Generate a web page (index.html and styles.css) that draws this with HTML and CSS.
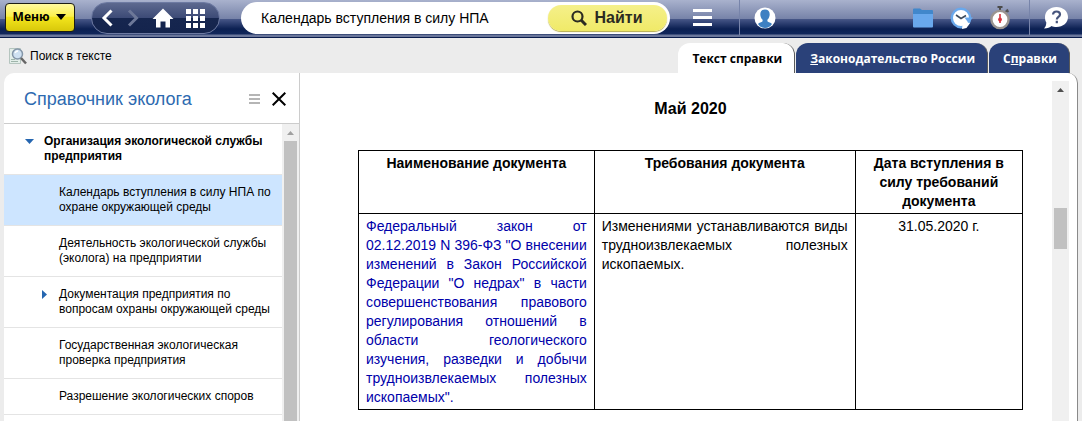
FILE: index.html
```html
<!DOCTYPE html>
<html lang="ru">
<head>
<meta charset="utf-8">
<meta name="viewport" content="width=device-width, initial-scale=1">
<title>Справочник эколога</title>
<link rel="stylesheet" href="styles.css">
</head>
<body>
<header class="topbar">
  <button class="menu-btn" type="button">Меню
    <svg width="12" height="6" viewBox="0 0 12 6" aria-hidden="true"><path d="M1 0h10L6 6z" fill="#000"/></svg>
  </button>
  <nav class="nav-pill" aria-label="Навигация">
    <button class="icon-btn" type="button" aria-label="Назад"><svg width="14" height="18" viewBox="0 0 14 18"><path d="M11.500 1.500 4 9l7.500 7.500" fill="none" stroke="#fff" stroke-width="3"/></svg></button>
    <button class="icon-btn" type="button" aria-label="Вперёд"><svg width="14" height="18" viewBox="0 0 14 18"><path d="M3 1.500 10.500 9 3 16.500" fill="none" stroke="#6d7898" stroke-width="3"/></svg></button>
    <button class="icon-btn" type="button" aria-label="Домой"><svg width="22" height="20" viewBox="0 0 22 20"><path d="M11 0.500 21.500 11H18v8.500h-4.500v-6h-5v6H4V11H0.500z" fill="#fff"/></svg></button>
    <button class="icon-btn grid-btn" type="button" aria-label="Разделы"><svg width="20" height="20" viewBox="0 0 20 20" fill="#fff"><path d="M0 1h5v5H0zM7 1h5v5H7zM14 1h5v5h-5zM0 8h5v5H0zM7 8h5v5H7zM14 8h5v5h-5zM0 15h5v5H0zM7 15h5v5H7zM14 15h5v5h-5z"/></svg></button>
  </nav>
  <form class="search">
    <input class="search-input" type="text" aria-label="Поиск" value="Календарь вступления в силу НПА">
    <button class="find-btn" type="button">
      <svg width="16" height="16" viewBox="0 0 16 16" aria-hidden="true"><circle cx="6.500" cy="6.500" r="5" fill="none" stroke="#2b2b22" stroke-width="2.200"/><path d="m10 10 5 5" stroke="#2b2b22" stroke-width="3"/></svg>
      Найти
    </button>
  </form>
  <button class="icon-btn burger" type="button" aria-label="Список"><svg width="20" height="18" viewBox="0 0 20 18"><path d="M1 0h19v3H1zM1 7h19v3H1zM1 14h19v3H1z" fill="#fff"/></svg></button>
  <span class="divider"></span>
  <button class="icon-btn user" type="button" aria-label="Профиль"><svg width="22" height="22" viewBox="0 0 22 22"><circle cx="11" cy="11" r="10.500" fill="#fff"/><path d="M11 2.500c3 0 4.700 2 4.700 4.700 0 2-.8 4.300-2.300 5.500v1.500c1 1 3.500 1.200 4.600 2.700-1.500 2.400-4.200 4-7 4s-5.500-1.600-7-4c1.100-1.500 3.600-1.700 4.600-2.700v-1.500c-1.500-1.200-2.300-3.500-2.300-5.500C6.300 4.500 8 2.500 11 2.500z" fill="#3e80c2"/></svg></button>
  <div class="tools">
    <button class="icon-btn" type="button" aria-label="Папки"><svg width="20" height="20" viewBox="0 0 20 20"><path d="M0 1.500Q0 .5 1 .5h6l2 1.500h10q1 0 1 1V7H0z" fill="#4187cb"/><path d="M0 6h20v12.500q0 1-1 1H1q-1 0-1-1z" fill="#69a8ec"/></svg></button>
    <button class="icon-btn" type="button" aria-label="История"><svg width="23" height="22" viewBox="0 0 23 22"><circle cx="11" cy="11" r="9.200" fill="#fff" stroke="#69a8ec" stroke-width="2.400"/><path d="m12 22 .5-4 4.500-3 3 1-3.500 5z" fill="#fff"/><path d="M14.500 10.500H23L18.500 16z" fill="#69a8ec"/><path d="m6 8 5 3.500L16 8.500" fill="none" stroke="#3d4a5c" stroke-width="1.600"/></svg></button>
    <button class="icon-btn" type="button" aria-label="Таймер"><svg width="20" height="24" viewBox="0 0 20 24"><path d="M7.500 0h5v2h-1.500v2H9V2H7.500z" fill="#4b4b4b"/><path d="m15.500 6 2.500-2.500M16.500 4l2 2" stroke="#555" stroke-width="1.800"/><circle cx="10" cy="13.500" r="8.600" fill="#fff" stroke="#9a9490" stroke-width="2.400"/><path d="M10 8v9" stroke="#d8323c" stroke-width="1.600"/><circle cx="10" cy="13.500" r="1.900" fill="#d8323c"/></svg></button>
  </div>
  <span class="divider"></span>
  <button class="icon-btn help" type="button" aria-label="Справка"><svg width="26" height="22" viewBox="0 0 26 22"><path d="M13.500 0C20 0 25 4.300 25 10s-5 10-11.500 10c-2 0-3.500-.3-5-1-1.500 1.500-4 2.500-7.500 2.500C2.500 20 3.300 18 3.300 15.500 2.300 14 2 12 2 10 2 4.300 7 0 13.500 0z" fill="#fff"/><path d="M10 7.500c.2-2 1.500-3 3.500-3 2.200 0 3.500 1.100 3.500 2.900 0 2.500-3.200 2.400-3.200 5M13.800 13.800v2.400" fill="none" stroke="#46547c" stroke-width="2.200"/></svg></button>
</header>

<div class="subbar">
  <a class="text-search" href="#">
    <svg width="18" height="18" viewBox="0 0 18 18" aria-hidden="true"><path d="M.5 1.500h11v15H.5z" fill="#e3eee9" stroke="#b5c5bf"/><path d="M2 14.500h7M2 12.500h4" stroke="#9fb5ab"/><circle cx="8.500" cy="7" r="5" fill="#cfe1f2" stroke="#8496a8" stroke-width="1.500"/><path d="M6 6q1-2 3-2" fill="none" stroke="#fff" stroke-width="1.300"/><path d="m12 11 5 5.500" stroke="#666" stroke-width="2.500"/></svg>
    Поиск в тексте
  </a>
  <nav class="tabs">
    <a class="tab tab-active" href="#">Текст справки</a>
    <a class="tab" href="#"><u>З</u>аконодательство России</a>
    <a class="tab" href="#">С<u>п</u>равки</a>
  </nav>
</div>

<div class="panel">
  <aside class="sidebar">
    <div class="side-head">
      <h1 class="side-title">Справочник эколога</h1>
      <button class="icon-btn" type="button" aria-label="Меню справочника"><svg width="11" height="10" viewBox="0 0 11 10"><path d="M0 0h11v2H0zM0 4h11v2H0zM0 8h11v2H0z" fill="#b5b5b5"/></svg></button>
      <button class="icon-btn" type="button" aria-label="Закрыть"><svg width="14" height="14" viewBox="0 0 14 14"><path d="m.7.7 12.600 12.600M13.300.7.7 13.300" stroke="#000" stroke-width="2"/></svg></button>
    </div>
    <div class="side-body">
      <ul class="tree">
        <li class="node node-root"><svg class="arrow" width="9" height="5" viewBox="0 0 9 5"><path d="M0 0h9L4.500 5z" fill="#2566b0"/></svg><a href="#">Организация экологической службы предприятия</a></li>
        <li class="node node-active"><a href="#">Календарь вступления в силу НПА по охране окружающей среды</a></li>
        <li class="node"><a href="#">Деятельность экологической службы (эколога) на предприятии</a></li>
        <li class="node node-parent"><svg class="arrow" width="5" height="9" viewBox="0 0 5 9"><path d="M0 0v9l5-4.500z" fill="#2566b0"/></svg><a href="#">Документация предприятия по вопросам охраны окружающей среды</a></li>
        <li class="node"><a href="#">Государственная экологическая проверка предприятия</a></li>
        <li class="node"><a href="#">Разрешение экологических споров</a></li>
      </ul>
      <div class="side-scroll"><svg class="scroll-arrow" width="7" height="4" viewBox="0 0 7 4"><path d="M0 4h7L3.500 0z" fill="#a0a0a0"/></svg><div class="side-thumb"></div></div>
    </div>
  </aside>
  <main class="content">
    <article class="doc">
      <h2 class="doc-title">Май 2020</h2>
      <table class="doc-table">
        <colgroup><col class="col-name"><col class="col-req"><col class="col-date"></colgroup>
        <thead><tr><th>Наименование документа</th><th>Требования документа</th><th>Дата вступления в силу требований документа</th></tr></thead>
        <tbody><tr>
          <td><a class="doc-link" href="#">Федеральный закон от 02.12.2019 N 396-ФЗ "О внесении изменений в Закон Российской Федерации "О недрах" в части совершенствования правового регулирования отношений в области геологического изучения, разведки и добычи трудноизвлекаемых полезных ископаемых".</a></td>
          <td>Изменениями устанавливаются виды трудноизвлекаемых полезных ископаемых.</td>
          <td class="cell-date">31.05.2020 г.</td>
        </tr></tbody>
      </table>
    </article>
    <div class="doc-scroll"><svg class="scroll-arrow" width="7" height="4" viewBox="0 0 7 4"><path d="M0 4h7L3.500 0z" fill="#505050"/></svg><div class="doc-thumb"></div></div>
  </main>
</div>
</body>
</html>
```

FILE: styles.css
```css
* { box-sizing: border-box; }

body {
  margin: 0;
  min-height: 100vh;
  display: flex;
  flex-direction: column;
  background: #ececec;
  color: #000;
  font-family: "Liberation Sans", Arial, sans-serif;
  font-size: 12px;
}

a { color: inherit; text-decoration: none; }
svg { display: block; flex: none; }
button { font-family: inherit; cursor: pointer; }

.icon-btn {
  display: flex;
  padding: 0;
  border: 0;
  background: none;
}

/* Top bar */
.topbar {
  display: flex;
  align-items: center;
  height: 38px;
  padding: 0 13px 3px 5px;
  background: linear-gradient(#a9b2cd 0, #7682a8 19px, #475788 19px, #0b2052 29px, #10265b 34px, #6b779b 35px, #6b779b 37px, #0a1c4c 37px);
}

.menu-btn {
  display: flex;
  align-items: center;
  justify-content: center;
  gap: 6px;
  width: 70px;
  height: 29px;
  padding: 0 0 2px;
  border: 1px solid #1c1c14;
  border-radius: 4px;
  background: linear-gradient(#fff9a0, #fbf04c 45%, #f3e51c 50%, #d8c80a);
  font-family: "Open Sans", sans-serif;
  font-size: 12px;
  font-weight: 700;
}

.nav-pill {
  display: flex;
  align-items: center;
  gap: 12px;
  width: 129px;
  height: 32px;
  margin-left: 16px;
  padding: 0 13px 0 8px;
  border: 1px solid #6d7aa2;
  border-radius: 16px;
  background: linear-gradient(#5d698f, #3c4a76 50%, #16264f 50%, #14244d);
}

.search {
  display: flex;
  align-items: center;
  width: 429px;
  height: 32px;
  margin-left: 21px;
  padding: 0 3px 0 20px;
  border-radius: 16px;
  background: #fff;
}

.search-input {
  flex: 1;
  min-width: 0;
  padding: 0;
  border: 0;
  outline: 0;
  background: none;
  font-family: inherit;
  font-size: 14px;
}

.find-btn {
  display: flex;
  align-items: center;
  justify-content: center;
  gap: 8px;
  width: 119px;
  height: 26px;
  padding: 0 2px 0 0;
  border: 0;
  border-radius: 13px;
  background: linear-gradient(#f5f08a, #f0ea68);
  box-shadow: 0 1px 1px #b5ad4a;
  color: #2b2b22;
  font-size: 16px;
  font-weight: 700;
}

.burger { margin-left: 22px; }

.divider {
  width: 1px;
  height: 35px;
  margin: 0 14px 0 27px;
  background: #7784aa;
}

.tools {
  display: flex;
  align-items: center;
  gap: 17px;
  margin-left: auto;
}

.tools + .divider { margin: 0 13px 0 19px; }

/* Secondary bar */
.subbar {
  display: flex;
  align-items: flex-end;
  justify-content: space-between;
  height: 35px;
  padding: 0 12px 0 9px;
}

.text-search {
  display: flex;
  align-items: center;
  align-self: center;
  gap: 3px;
}

.tabs { display: flex; gap: 1px; }

.tab {
  height: 30px;
  padding: 0 12px 0 14px;
  border-right: 1px solid #5a5a5a;
  border-radius: 12px 12px 0 0;
  background: #2a4179;
  color: #fff;
  font-family: "Open Sans", sans-serif;
  font-size: 12px;
  font-weight: 700;
  line-height: 32px;
}

.tab-active { background: #fff; color: #000; }

/* Main panel */
.panel {
  flex: 1;
  display: flex;
  margin: 0 4px;
  border-right: 1px solid #8a8a8a;
  border-radius: 10px 10px 0 0;
  background: #fff;
  overflow: hidden;
}

.sidebar {
  flex: none;
  display: flex;
  flex-direction: column;
  width: 296px;
  border-right: 1px solid #ccc;
}

.side-head {
  display: flex;
  align-items: center;
  gap: 12px;
  height: 51px;
  padding: 2px 13px 0 20px;
  border-bottom: 1px solid #ccc;
}

.side-title {
  flex: 1;
  margin: 0;
  color: #2d6ab0;
  font-size: 18px;
  font-weight: 400;
}

.side-body { flex: 1; display: flex; }

.tree {
  flex: 1;
  margin: 0;
  padding: 0;
  list-style: none;
}

.node {
  display: flex;
  padding: 10px 8px 10px 55px;
  border-bottom: 1px solid #e4e4e4;
  line-height: 15px;
}

.node-root { gap: 10px; padding-left: 21px; font-weight: 700; }
.node-parent { gap: 12px; padding-left: 38px; }
.node-active { background: #cde5ff; }
.arrow { margin-top: 5px; }
.node-parent .arrow { margin-top: 3px; }

.side-scroll {
  display: flex;
  flex-direction: column;
  align-items: center;
  gap: 6px;
  width: 17px;
  padding-top: 7px;
  background: #f0f0f0;
}

.side-thumb { flex: 1; width: 13px; background: #c1c1c1; }

/* Document */
.content {
  flex: 1;
  display: flex;
  min-width: 0;
  padding: 8px 8px 0 58px;
}

.doc { flex: 1; min-width: 0; padding-right: 29px; }

.doc-title {
  margin: 18px 0 31px;
  font-size: 16px;
  line-height: 20px;
  text-align: center;
}

.doc-table {
  width: 100%;
  border-collapse: collapse;
  table-layout: fixed;
  font-size: 14px;
  line-height: 19px;
}

.col-name { width: 35.5%; }
.col-req { width: 39.3%; }
.col-date { width: 25.2%; }

.doc-table th,
.doc-table td {
  padding: 3px 7px 2px;
  border: 1px solid #000;
  vertical-align: top;
  text-align: justify;
}

.doc-table th,
.doc-table .cell-date { text-align: center; }

.doc-link { color: #0000aa; }

.doc-scroll {
  display: flex;
  flex-direction: column;
  align-items: center;
  gap: 116px;
  width: 17px;
  padding-top: 7px;
  background: #f0f0f0;
}

.doc-thumb { width: 13px; height: 41px; background: #c1c1c1; }
```
